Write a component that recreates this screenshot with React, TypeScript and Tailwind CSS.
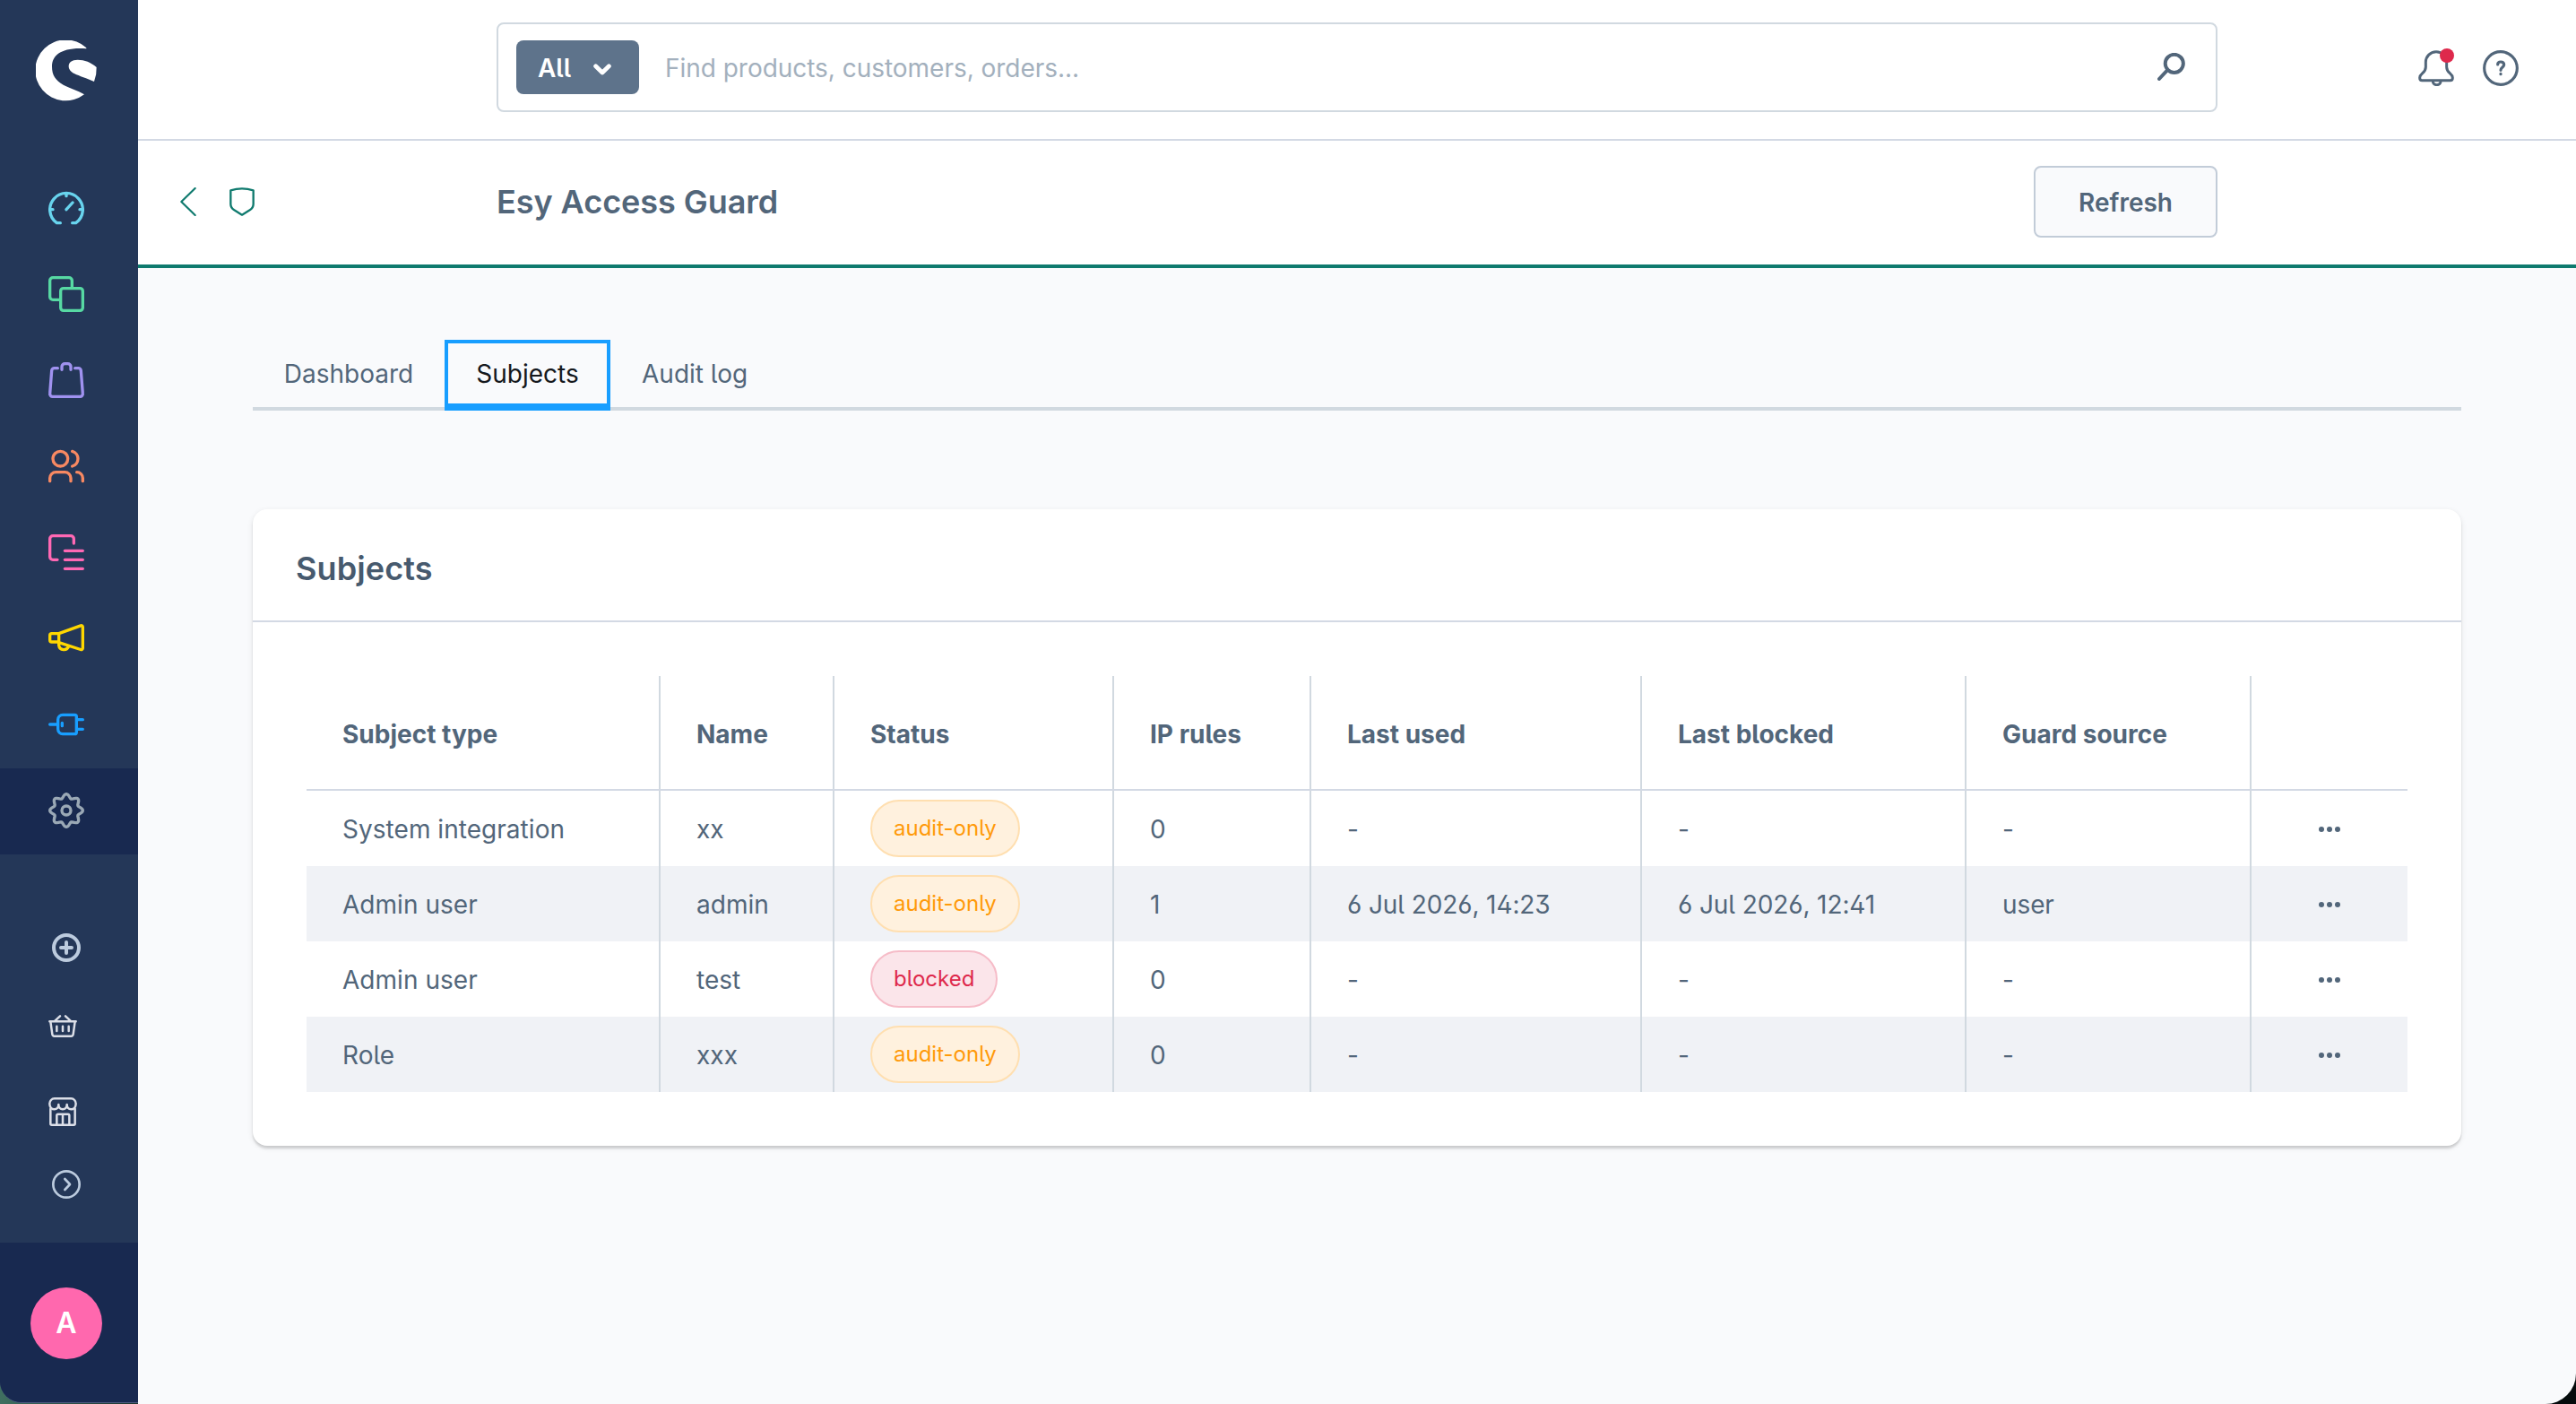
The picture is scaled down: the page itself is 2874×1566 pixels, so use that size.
import type { ReactNode } from "react";

const gearPath =
  Array.from({ length: 97 }, (_, i) => {
    const t = (i / 96) * Math.PI * 2;
    const r = 48.5 + 6.5 * Math.cos(8 * t);
    const x = (60 + r * Math.sin(t)).toFixed(2);
    const y = (60 - r * Math.cos(t)).toFixed(2);
    return `${i === 0 ? "M" : "L"}${x} ${y}`;
  }).join("") + "Z";

function Icon({ size = 120, width = 10, className, children }: { size?: number; width?: number; className?: string; children: ReactNode }) {
  return (
    <svg
      viewBox={`0 0 ${size} ${size}`}
      fill="none"
      stroke="currentColor"
      strokeWidth={width}
      strokeLinecap="round"
      strokeLinejoin="round"
      className={className}
    >
      {children}
    </svg>
  );
}

const navItems: { name: string; color: string; active?: boolean; art: ReactNode }[] = [
  {
    name: "Dashboard",
    color: "text-[#68d4ee]",
    art: <path d="M40 110H28A55 55 0 1 1 92 110H80M60 10V20M5 65H15M105 65H115M60 65L81 42" />,
  },
  {
    name: "Catalogues",
    color: "text-[#57d9a3]",
    art: (
      <>
        <path d="M37 79H15A10 10 0 0 1 5 69V15A10 10 0 0 1 15 5H69A10 10 0 0 1 79 15V37" />
        <rect x="41" y="41" width="74" height="74" rx="9" />
      </>
    ),
  },
  {
    name: "Orders",
    color: "text-[#a092f0]",
    art: (
      <path d="M31 20H20A9 9 0 0 0 11 29L5 105A9 9 0 0 0 14 115H106A9 9 0 0 0 115 105L109 29A9 9 0 0 0 100 20H89M45 25V15A10 10 0 0 1 55 5H65A10 10 0 0 1 75 15V25" />
    ),
  },
  {
    name: "Customers",
    color: "text-[#f88962]",
    art: (
      <>
        <circle cx="40" cy="35" r="25" />
        <path d="M80 10A26 26 0 0 1 80 60M5 110V100A20 20 0 0 1 25 80H55A20 20 0 0 1 75 100V110M95 80A20 20 0 0 1 115 100V110" />
      </>
    ),
  },
  {
    name: "Content",
    color: "text-[#ff68b4]",
    art: <path d="M30 85H15A10 10 0 0 1 5 75V15A10 10 0 0 1 15 5H75A10 10 0 0 1 85 15V30M55 55H115M55 85H115M55 115H115" />,
  },
  {
    name: "Marketing",
    color: "text-[#ffd700]",
    art: (
      <path d="M35 44H11A6 6 0 0 0 5 50V66A6 6 0 0 0 11 72H35M35 44L108 17.500A5 5 0 0 1 115 22V93A5 5 0 0 1 108 97.500L35 74ZM35 74V83A17 17 0 0 0 68 86" />
    ),
  },
  {
    name: "Extensions",
    color: "text-[#189eff]",
    art: <path d="M5 60H30M48 28H88A6 6 0 0 1 94 34V86A6 6 0 0 1 88 92H48A16 16 0 0 1 32 76V44A16 16 0 0 1 48 28ZM46 55V65M96 44H115M96 76H115" />,
  },
  {
    name: "Settings",
    color: "text-[#9aa8b5]",
    active: true,
    art: (
      <>
        <path d={gearPath} />
        <circle cx="60" cy="60" r="15" />
      </>
    ),
  },
];

function Sidebar() {
  return (
    <aside className="flex h-[1565px] w-[154px] shrink-0 flex-col overflow-hidden rounded-bl-[24px] border-b border-[#4c5a80] bg-[#243758]">
      <div className="flex h-[185px] shrink-0 pt-[45px] pl-10">
        <svg viewBox="0 0 204 204" className="size-[68px] fill-white">
          <path d="M169 25A102 102 0 1 0 162 181C140 167 112 160 92 149C66 134 54 118 54 88C54 50 85 22 169 28Z" />
          <path d="M203 90C184 73 163 65 140 65C120 65 110 74 110 87C110 96 116 105 130 112C144 119 172 128 195 138Q204 115 203 90Z" />
        </svg>
      </div>
      <nav className="flex flex-col">
        {navItems.map((item) => (
          <a
            key={item.name}
            aria-label={item.name}
            className={item.active ? "flex h-24 items-center bg-[#182950] pb-0.5 pl-[54px]" : "flex h-24 items-center pb-0.5 pl-[54px]"}
          >
            <Icon className={`size-10 ${item.color}`}>{item.art}</Icon>
          </a>
        ))}
      </nav>
      <div className="flex flex-col pt-[88px]">
        <Icon size={96} width={12} className="ml-[58px] size-8 text-[#bccbde]">
          <circle cx="48" cy="48" r="42" />
          <path d="M48 30V66M30 48H66" />
        </Icon>
        <Icon size={96} width={7.5} className="mt-14 ml-[54px] size-8 text-[#dcdfe8]">
          <path d="M39 13L22 29M57 13L74 29M4 31H92M7 31L13 74A7 7 0 0 0 20 80H76A7 7 0 0 0 83 74L89 31M28 47V63M48 47V63M68 47V63" />
        </Icon>
        <Icon size={96} width={7.5} className="mt-[63px] ml-[54px] size-8 text-[#dcdfe8]">
          <path d="M20 4H76A16 17 0 0 1 92 21C92 34 84 40 76 40C68 40 62 34 62 24C62 34 56 40 48 40C40 40 34 34 34 24C34 34 28 40 20 40C12 40 4 34 4 21A16 17 0 0 1 20 4Z" />
          <path d="M7 38V88A4 4 0 0 0 11 92H85A4 4 0 0 0 89 88V38M28 90V60A4 4 0 0 1 32 56H66A4 4 0 0 1 70 60V90M48 56V90" />
        </Icon>
        <Icon size={96} width={8} className="mt-[49px] ml-[58px] size-8 text-[#bccbde]">
          <circle cx="48" cy="48" r="44" />
          <path d="M43 30L60 48L43 66" />
        </Icon>
      </div>
      <div className="mt-[49px] flex flex-1 bg-[#182950] pt-[50px] pl-[34px]">
        <div className="flex size-20 items-center justify-center rounded-full bg-[#ff68ae] text-[32px] font-semibold text-white">A</div>
      </div>
    </aside>
  );
}

function SearchBar() {
  return (
    <header className="flex h-[157px] shrink-0 border-b-2 border-[#d3d9e4] bg-white pt-[25px] pl-[400px]">
      <div className="flex h-[100px] w-[1920px] items-center rounded-lg border-2 border-[#d1d9e0] pl-5">
        <button className="flex h-[60px] w-[137px] items-center rounded-lg bg-[#5e738b] pl-6 text-[28px] font-semibold text-white">
          <span className="pt-0.5">All</span>
          <svg viewBox="0 0 20 13" className="mt-1 ml-[25px] h-[13px] w-5" fill="none" stroke="currentColor" strokeWidth="4.800" strokeLinecap="round" strokeLinejoin="round">
            <path d="M2.600 2.800L10 10L17.400 2.800" />
          </svg>
        </button>
        <span className="ml-[29px] pt-0.5 text-[28px] tracking-[-0.03px] text-[#a3b0bd]">Find products, customers, orders...</span>
        <Icon size={94} width={12} className="-mt-px mr-[34px] ml-auto size-[31px] text-[#52667a]">
          <circle cx="57" cy="36" r="30.500" />
          <path d="M34 58L6 88" />
        </Icon>
      </div>
      <div className="mt-[31px] ml-[224px] flex gap-8 text-[#52667a]">
        <div className="relative size-10">
          <Icon width={9} className="size-10">
            <path d="M13 101H107C112 101 115 97 115 92C115 77 95 78 95 56V40A35 35 0 0 0 25 40V56C25 78 5 77 5 92C5 97 8 101 13 101ZM49 105A13 11 0 0 0 75 105" />
          </Icon>
          <span className="absolute -top-0.5 right-0 size-4 rounded-full bg-[#de294c]" />
        </div>
        <Icon width={9.5} className="size-10">
          <circle cx="60" cy="60" r="55" />
          <path d="M50 48C50 42 54 39 60 39C67 39 71 43 71 49C71 57 60 57 60 67M60 79V80" />
        </Icon>
      </div>
    </header>
  );
}

function PageHeader() {
  return (
    <div className="flex h-[142px] shrink-0 items-center border-b-4 border-[#0f7a6e] bg-white pb-0.5">
      <div className="flex w-[400px] shrink-0 items-center pl-[47px] text-[#0f7a6e]">
        <svg viewBox="0 0 54 96" className="h-8 w-[18px]" fill="none" stroke="currentColor" strokeWidth="6.500" strokeLinecap="round" strokeLinejoin="round">
          <path d="M50 3L4 48L50 93" />
        </svg>
        <svg viewBox="0 0 84 96" className="ml-[37px] h-8 w-7" fill="none" stroke="currentColor" strokeWidth="7" strokeLinecap="round" strokeLinejoin="round">
          <path d="M4 10Q42 -2 80 10V56Q80 68 68 76L42 92L16 76Q4 68 4 56Z" />
        </svg>
      </div>
      <h2 className="w-[1715px] text-[36px] font-semibold tracking-[-0.05px] text-[#52667a]">Esy Access Guard</h2>
      <button className="h-20 w-[205px] rounded-lg border-2 border-[#c2ccd8] bg-[#f9fafc] pt-0.5 text-[28px] font-semibold text-[#52667a]">Refresh</button>
    </div>
  );
}

function Tabs() {
  return (
    <div className="flex h-[79px] border-b-4 border-[#d1d9e0] text-[28px] text-[#52667a]">
      <div className="flex w-[214px] items-center justify-center">Dashboard</div>
      <div className="-mb-1 flex h-[79px] w-[185px] items-center justify-center border-4 border-b-8 border-[#189eff] text-[#15181d]">
        Subjects
      </div>
      <div className="flex items-center pl-[35px]">Audit log</div>
    </div>
  );
}

const columns = ["Subject type", "Name", "Status", "IP rules", "Last used", "Last blocked", "Guard source", ""];

const rows = [
  ["System integration", "xx", "audit-only", "0", "-", "-", "-"],
  ["Admin user", "admin", "audit-only", "1", "6 Jul 2026, 14:23", "6 Jul 2026, 12:41", "user"],
  ["Admin user", "test", "blocked", "0", "-", "-", "-"],
  ["Role", "xxx", "audit-only", "0", "-", "-", "-"],
];

const gridCols = "grid grid-cols-[395px_194px_312px_220px_369px_362px_318px_174px]";

function Badge({ label }: { label: string }) {
  const tone = label === "blocked" ? "border-[#f6bcc8] bg-[#fbe5ea] text-[#de294c]" : "border-[#ffdfb0] bg-[#fff1de] text-[#ff9a0a]";
  return <span className={`flex h-16 items-center rounded-full border-2 px-6 text-[24px] ${tone}`}>{label}</span>;
}

function SubjectsCard() {
  return (
    <section className="mt-[110px] h-[710px] rounded-2xl bg-white shadow-[0_2px_2px_rgba(0,0,0,0.08),0_4px_2px_rgba(0,0,0,0.06),0_2px_6px_rgba(0,0,0,0.1)]">
      <div className="flex h-[126px] items-center border-b-2 border-[#d3d9e4] pt-2 pl-12 text-[36px] font-semibold tracking-[0.1px] text-[#475a6e]">
        Subjects
      </div>
      <div className="px-[60px] pt-[60px] text-[28px] text-[#52667a]">
        <div className={`${gridCols} h-32 border-b-2 border-[#d3d9e4] font-bold`}>
          {columns.map((c, i) => (
            <div key={i} className={i < 7 ? "flex items-center border-r-2 border-[#d1d9e0] pt-1 pl-10" : ""}>
              {c}
            </div>
          ))}
        </div>
        {rows.map((row, r) => (
          <div key={r} className={r % 2 ? `${gridCols} h-[84px] bg-[#f0f2f6]` : `${gridCols} h-[84px]`}>
            {row.map((cell, i) => (
              <div key={i} className="flex items-center border-r-2 border-[#d1d9e0] pl-10">
                {i === 2 ? <Badge label={cell} /> : <span className={i > 3 ? "pt-0.5 tracking-[-0.1px]" : "pt-0.5 tracking-[0.04px]"}>{cell}</span>}
              </div>
            ))}
            <div className="flex items-center justify-center gap-[2.500px] pt-0.5">
              <i className="size-[6.500px] rounded-full bg-[#52667a]" />
              <i className="size-[6.500px] rounded-full bg-[#52667a]" />
              <i className="size-[6.500px] rounded-full bg-[#52667a]" />
            </div>
          </div>
        ))}
      </div>
    </section>
  );
}

export default function App() {
  return (
    <div className="flex h-[1566px] w-[2874px] overflow-hidden bg-linear-to-r from-[#3f6f60] to-[#050b0c] to-10% font-['Inter',sans-serif] [font-feature-settings:'cv02','cv03','cv04','cv05','cv09']">
      <Sidebar />
      <div className="flex flex-1 flex-col overflow-hidden rounded-br-[34px] bg-[#f9fafc]">
        <SearchBar />
        <PageHeader />
        <main className="px-32 pt-20">
          <Tabs />
          <SubjectsCard />
        </main>
      </div>
    </div>
  );
}
